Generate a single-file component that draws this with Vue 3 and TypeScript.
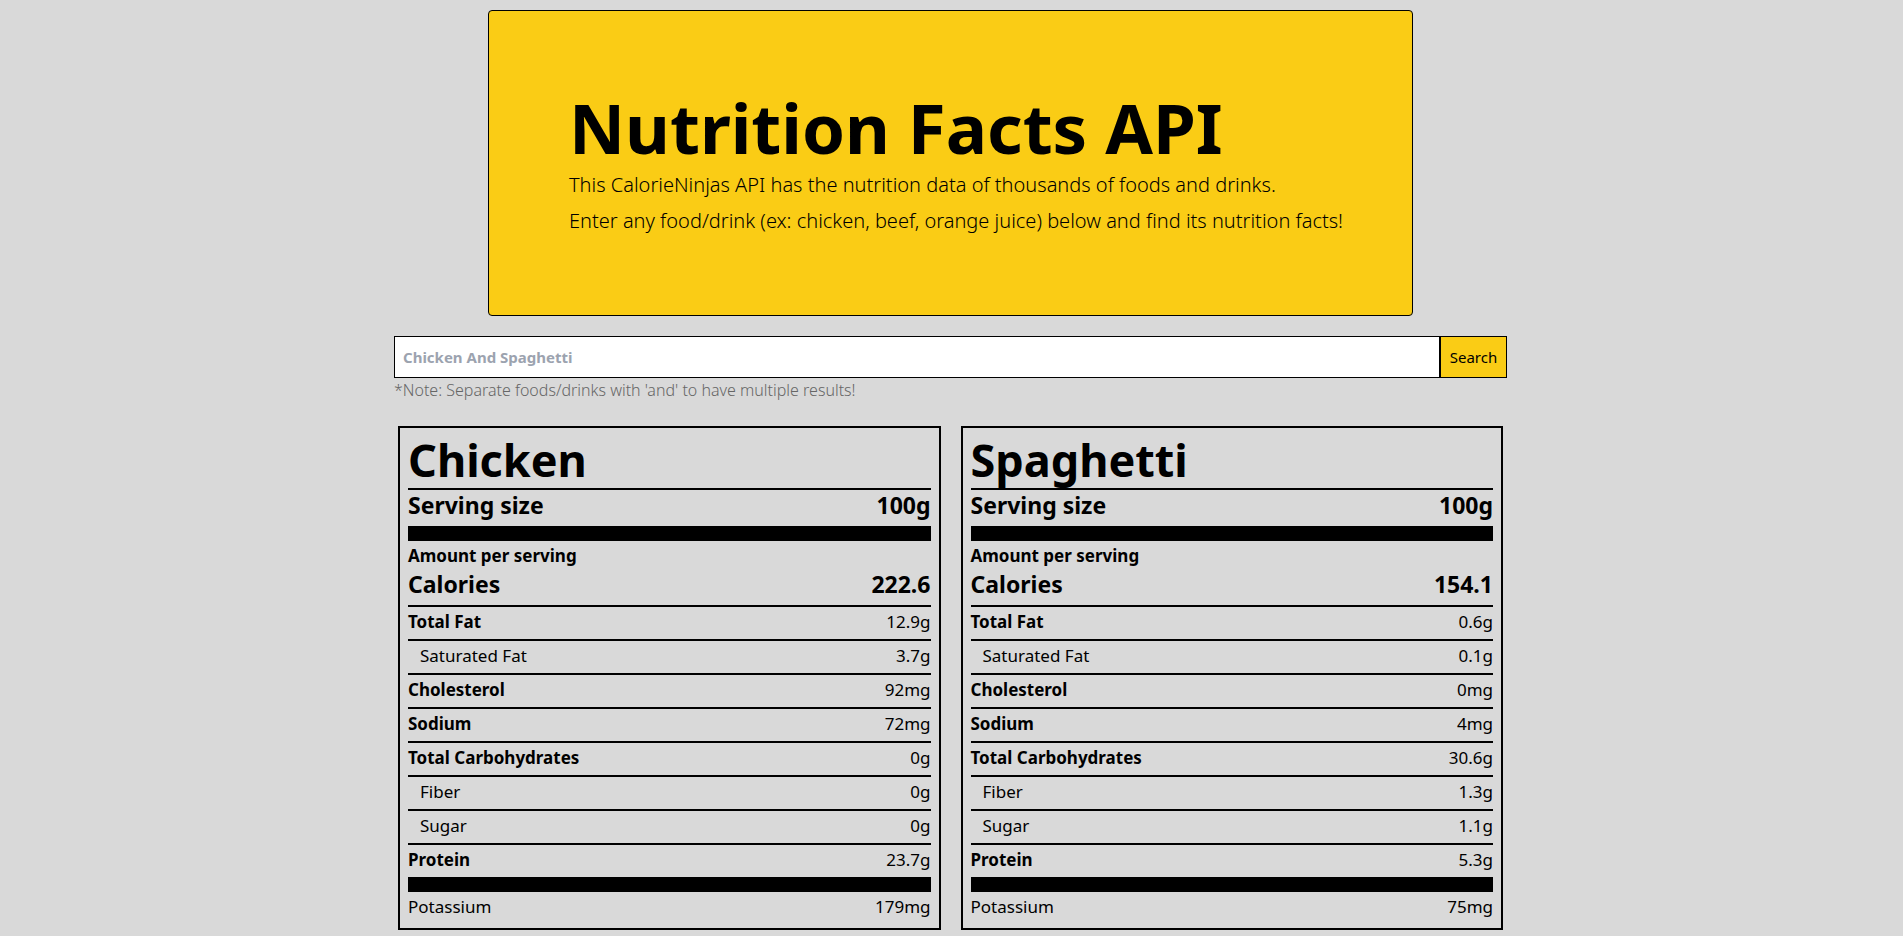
<script setup lang="ts">
import { ref } from 'vue'

interface Nutrient {
  label: string
  value: string
  kind: 'main' | 'sub'
}

interface Food {
  name: string
  serving: string
  calories: string
  nutrients: Nutrient[]
  potassium: string
}

const query = ref('')

function makeFood(name: string, calories: string, v: string[]): Food {
  return {
    name,
    serving: '100g',
    calories,
    nutrients: [
      { label: 'Total Fat', value: v[0], kind: 'main' },
      { label: 'Saturated Fat', value: v[1], kind: 'sub' },
      { label: 'Cholesterol', value: v[2], kind: 'main' },
      { label: 'Sodium', value: v[3], kind: 'main' },
      { label: 'Total Carbohydrates', value: v[4], kind: 'main' },
      { label: 'Fiber', value: v[5], kind: 'sub' },
      { label: 'Sugar', value: v[6], kind: 'sub' },
      { label: 'Protein', value: v[7], kind: 'main' },
    ],
    potassium: v[8],
  }
}

const foods: Food[] = [
  makeFood('Chicken', '222.6', ['12.9g', '3.7g', '92mg', '72mg', '0g', '0g', '0g', '23.7g', '179mg']),
  makeFood('Spaghetti', '154.1', ['0.6g', '0.1g', '0mg', '4mg', '30.6g', '1.3g', '1.1g', '5.3g', '75mg']),
]
</script>

<template>
  <main class="page">
    <header class="hero">
      <h1>Nutrition Facts API</h1>
      <p>This CalorieNinjas API has the nutrition data of thousands of foods and drinks.</p>
      <p>Enter any food/drink (ex: chicken, beef, orange juice) below and find its nutrition facts!</p>
    </header>

    <form class="search" @submit.prevent>
      <input
        v-model="query"
        type="text"
        aria-label="Foods or drinks"
        aria-describedby="search-note"
        placeholder="Chicken And Spaghetti"
      />
      <button type="submit">Search</button>
    </form>
    <p id="search-note" class="note">*Note: Separate foods/drinks with 'and' to have multiple results!</p>

    <section class="results">
      <article v-for="food in foods" :key="food.name" class="card">
        <h2 :id="food.name">{{ food.name }}</h2>
        <table :aria-labelledby="food.name">
          <tbody>
            <tr class="large thick">
              <th scope="row">Serving size</th>
              <td>{{ food.serving }}</td>
            </tr>
            <tr class="amount">
              <th colspan="2">Amount per serving</th>
            </tr>
            <tr class="large">
              <th scope="row">Calories</th>
              <td>{{ food.calories }}</td>
            </tr>
            <tr v-for="n in food.nutrients" :key="n.label" class="nutrient" :class="n.kind">
              <th scope="row">{{ n.label }}</th>
              <td>{{ n.value }}</td>
            </tr>
            <tr class="potassium">
              <th scope="row">Potassium</th>
              <td>{{ food.potassium }}</td>
            </tr>
          </tbody>
        </table>
      </article>
    </section>
  </main>
</template>

<style>
body {
  margin: 0;
  background: #d9d9d9;
}
</style>

<style scoped>
.page {
  box-sizing: border-box;
  max-width: 1115px;
  margin: 0 auto;
  padding: 10px 2px 0 0;
  color: #000;
  font: 400 16px/24px "Noto Sans", "Open Sans", sans-serif;
}

h1,
h2,
p {
  margin: 0;
}

.hero {
  box-sizing: border-box;
  max-width: 925px;
  margin: 0 auto 20px;
  padding: 80px 64px 76px 80px;
  border: 1px solid #000;
  border-radius: 4px;
  background: #facc15;
}

.hero h1 {
  margin-bottom: 4px;
  font-size: 69px;
  line-height: 72px;
  font-weight: 700;
}

.hero p {
  font-size: 20px;
  line-height: 36px;
  font-weight: 300;
}

.search {
  display: flex;
}

.search input,
.search button {
  box-sizing: border-box;
  height: 42px;
  margin: 0;
  padding: 8px;
  border: 1px solid #000;
  border-radius: 0;
  font: inherit;
  color: #000;
}

.search input {
  flex: 1;
  min-width: 0;
  background: #fff;
  font-size: 15px;
  font-weight: 700;
}

.search input::placeholder {
  color: #9ca3af;
  opacity: 1;
}

.search button {
  flex: 0 0 67px;
  padding: 0;
  background: #facc15;
  font-size: 15px;
  cursor: pointer;
}

.note {
  color: #666;
  font-size: 16px;
  font-weight: 300;
}

.results {
  display: grid;
  grid-template-columns: 1fr 1fr;
  gap: 20px;
  padding: 24px 4px 0;
}

.card {
  padding: 8px;
  border: 2px solid #000;
}

.card h2 {
  padding-bottom: 4px;
  border-bottom: 2px solid #000;
  font-size: 45px;
  line-height: 48px;
  font-weight: 700;
}

table {
  width: 100%;
  border-spacing: 0;
  font-size: 17px;
  line-height: 28px;
}

th,
td {
  padding: 0;
  font-weight: 400;
}

th {
  text-align: left;
}

td {
  text-align: right;
}

.large th,
.large td {
  padding-bottom: 6px;
  font-size: 23px;
  line-height: 30px;
  font-weight: 700;
}

.thick th,
.thick td,
.nutrient:nth-last-child(2) th,
.nutrient:nth-last-child(2) td {
  border-bottom: 15px solid #000;
}

.amount th,
.potassium th,
.potassium td {
  padding-top: 2px;
  line-height: 26px;
}

.amount th,
.main th {
  font-weight: 700;
}

.nutrient th,
.nutrient td {
  padding-top: 1px;
  padding-bottom: 3px;
  border-top: 2px solid #000;
}

.sub th {
  padding-left: 12px;
}
</style>
